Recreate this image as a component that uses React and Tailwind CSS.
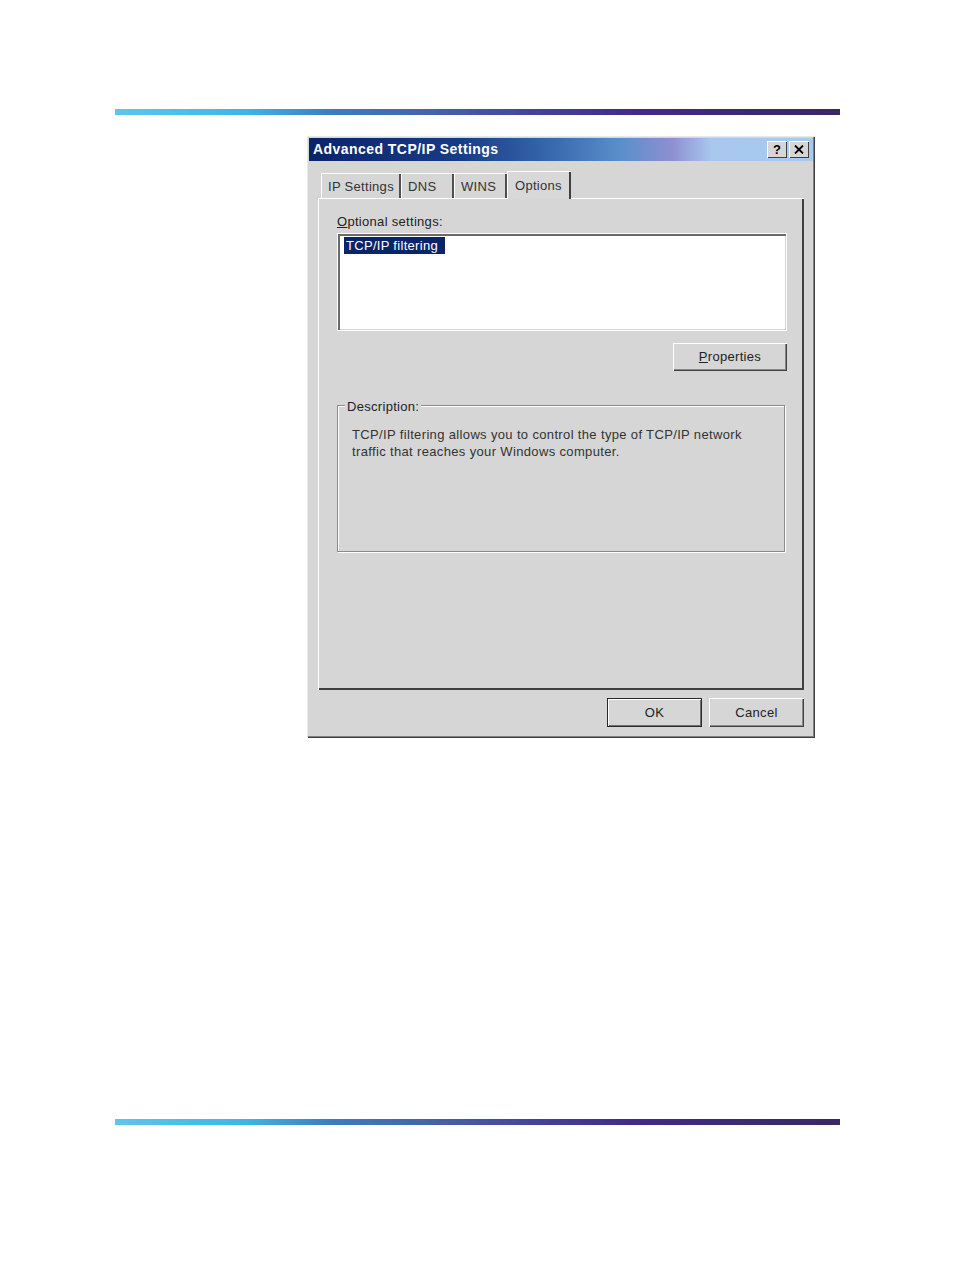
import React from 'react';

const font = { fontFamily: '"Liberation Sans", Arial, sans-serif' };

function Bar() {
  return (
    <div className="ml-[115px] w-[725px] h-[6px] bg-[linear-gradient(to_right,#5cc6ec_0%,#3fb5e6_18%,#3c7cc2_30%,#4660a8_45%,#433f96_60%,#43298a_72%,#3a2a72_88%,#3a2766_100%)]" />
  );
}

function WinButton({ children, className = '', isDefault = false }) {
  return (
    <div
      className={`flex items-center justify-center bg-[#d6d6d6] text-[13px] tracking-[0.3px] text-[#222] ${
        isDefault
          ? 'border border-[#2a2a2a] shadow-[inset_1px_1px_0_#ffffff,inset_-1px_-1px_0_#707070]'
          : 'shadow-[inset_1px_1px_0_#ffffff,inset_-1px_-1px_0_#404040,inset_-2px_-2px_0_#8a8a8a]'
      } ${className}`}
    >
      {children}
    </div>
  );
}

function Tab({ label, active, className = '' }) {
  if (active) {
    return (
      <div className={`relative z-10 -mb-[1px] h-[28px] pt-[4px] px-[7px] bg-[#d8d8d8] border-l border-t border-white shadow-[inset_-2px_0_0_#404040] text-[13px] tracking-[0.3px] text-[#333] ${className}`}>
        {label}
      </div>
    );
  }
  return (
    <div className={`mt-[2px] h-[25px] pt-[3px] px-[6px] bg-[#d6d6d6] border-l border-t border-white shadow-[inset_-2px_0_0_#505050] text-[13px] tracking-[0.3px] text-[#333] ${className}`}>
      {label}
    </div>
  );
}

export default function App() {
  return (
    <div className="min-h-[1272px] bg-white pt-[109px]" style={font}>
      <Bar />

      <div className="ml-[307px] mt-[21px] w-[508px] h-[602px] bg-[#d6d6d6] p-[2px] shadow-[inset_1px_1px_0_#e8e8e8,inset_-1px_-1px_0_#404040,inset_-2px_-2px_0_#808080]">
        {/* title bar */}
        <div className="h-[23px] flex items-center justify-between pl-[4px] pr-[4px] bg-[linear-gradient(to_right,#0a246a_0%,#173c86_30%,#3868ad_48%,#5a8fcc_62%,#8e8fd0_72%,#a8c8ee_80%,#a6caf0_100%)]">
          <span className="text-white font-bold text-[14px] tracking-[0.45px]">Advanced TCP/IP Settings</span>
          <div className="flex gap-[2px]">
            <div className="w-[20px] h-[17px] bg-[#d6d6d6] flex items-center justify-center text-[13px] font-bold text-black shadow-[inset_1px_1px_0_#ffffff,inset_-1px_-1px_0_#404040]">?</div>
            <div className="w-[20px] h-[17px] bg-[#d6d6d6] flex items-center justify-center shadow-[inset_1px_1px_0_#ffffff,inset_-1px_-1px_0_#404040]">
              <svg width="10" height="9" viewBox="0 0 10 9">
                <path d="M1 0.5 L9 8.5 M9 0.5 L1 8.5" stroke="#000" strokeWidth="1.8" />
              </svg>
            </div>
          </div>
        </div>

        {/* tabs */}
        <div className="mt-[9px] ml-[12px] flex items-end h-[28px]">
          <Tab label="IP Settings" className="w-[80px]" />
          <Tab label="DNS" className="w-[53px]" />
          <Tab label="WINS" className="w-[53px]" />
          <Tab label="Options" active className="w-[64px]" />
        </div>

        {/* tab panel */}
        <div className="ml-[9px] w-[486px] h-[492px] border-l border-t border-white shadow-[inset_-2px_-2px_0_#404040] pl-[18px] pt-[15px]">
          <div className="text-[13px] tracking-[0.3px] text-[#222] leading-[15px]">
            <span className="underline">O</span>ptional settings:
          </div>
          <div className="mt-[5px] ml-[1px] w-[448px] h-[96px] bg-white border-l-2 border-t-2 border-[#6a6a6a] shadow-[inset_-1px_-1px_0_#d6d6d6] pl-[4px] pt-[1px] leading-[17px] outline outline-1 outline-white">
            <div className="w-[101px] bg-[#0a246a] text-white text-[13px] tracking-[0.3px] leading-[17px] px-[2px]">TCP/IP filtering</div>
          </div>

          <div className="mt-[13px] flex justify-end w-[450px]">
            <WinButton className="w-[114px] h-[28px]">
              <span><span className="underline">P</span>roperties</span>
            </WinButton>
          </div>

          <div className="relative mt-[34px] w-[448px] h-[147px] border border-[#8a8a8a] shadow-[inset_1px_1px_0_#ffffff,1px_1px_0_#ffffff] pl-[14px] pt-[20px]">
            <span className="absolute -top-[7px] left-[7px] bg-[#d6d6d6] px-[2px] text-[13px] tracking-[0.3px] text-[#222] leading-[16px]">Description:</span>
            <p className="text-[13px] tracking-[0.35px] text-[#333] leading-[17px]">
              TCP/IP filtering allows you to control the type of TCP/IP network
              <br />
              traffic that reaches your Windows computer.
            </p>
          </div>
        </div>

        {/* bottom buttons */}
        <div className="mt-[8px] flex justify-end gap-[7px] pr-[9px]">
          <WinButton isDefault className="w-[95px] h-[29px]">OK</WinButton>
          <WinButton className="w-[95px] h-[29px]">Cancel</WinButton>
        </div>
      </div>

      <div className="mt-[381px]">
        <Bar />
      </div>
    </div>
  );
}
